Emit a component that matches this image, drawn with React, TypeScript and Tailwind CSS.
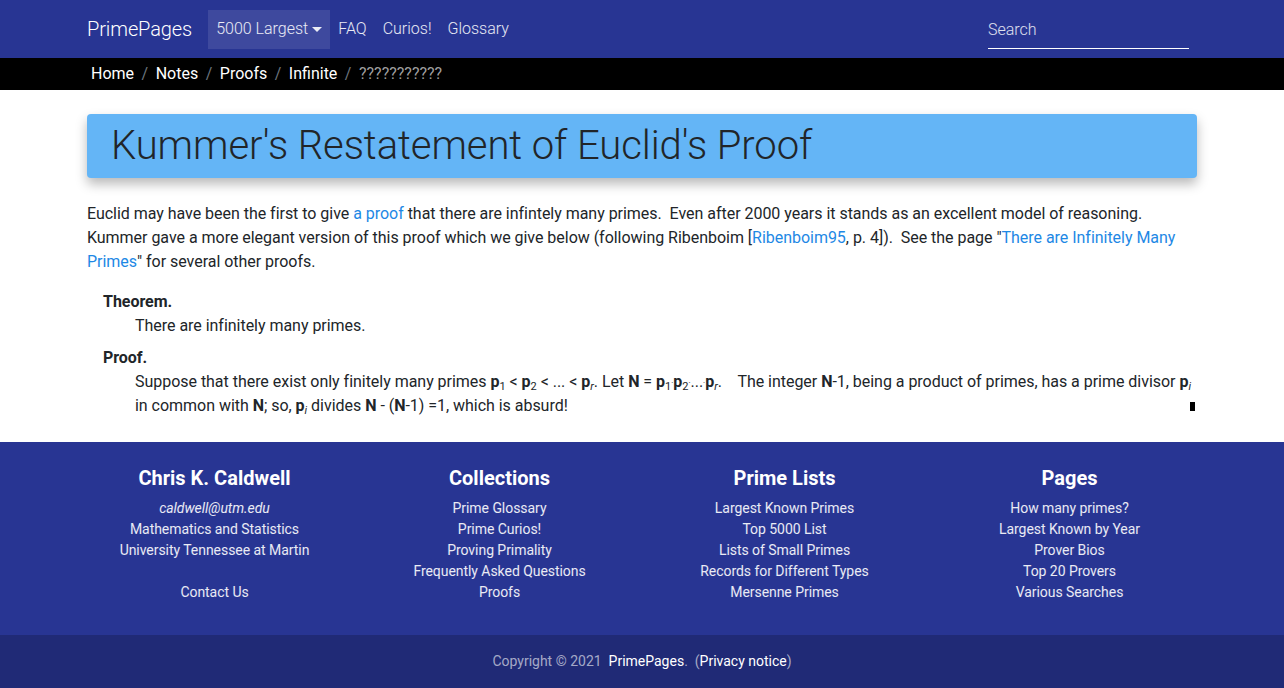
import React from "react";

const Sub = ({ children, i }: { children: React.ReactNode; i?: boolean }) => (
  <sub className={`text-[11px] ${i ? "italic" : ""}`}>{children}</sub>
);
const Dot = () => <sup className="text-[8px]">.</sup>;

export default function App() {
  const cols = [
    {
      h: "Chris K. Caldwell",
      items: [
        <span className="italic">caldwell@utm.edu</span>,
        "Mathematics and Statistics",
        "University Tennessee at Martin",
        "\u00a0",
        "Contact Us",
      ],
    },
    {
      h: "Collections",
      items: ["Prime Glossary", "Prime Curios!", "Proving Primality", "Frequently Asked Questions", "Proofs"],
    },
    {
      h: "Prime Lists",
      items: ["Largest Known Primes", "Top 5000 List", "Lists of Small Primes", "Records for Different Types", "Mersenne Primes"],
    },
    {
      h: "Pages",
      items: ["How many primes?", "Largest Known by Year", "Prover Bios", "Top 20 Provers", "Various Searches"],
    },
  ];
  return (
    <div className="min-h-[688px] bg-white text-[#212529]" style={{ fontFamily: "Roboto, 'Noto Sans', sans-serif" }}>
      {/* navbar */}
      <nav className="h-[58px] bg-[#283593] font-light">
        <div className="mx-auto flex h-full w-[1110px] items-center">
          <span className="mr-4 text-[20px] tracking-[-0.1px] text-white">PrimePages</span>
          <div className="flex h-[39px] items-center bg-white/10 px-2 text-[16px] text-white/90">
            5000 Largest
            <span className="ml-[4px] inline-block h-0 w-0 border-x-[5px] border-t-[5px] border-x-transparent border-t-white/90" />
          </div>
          <span className="px-2 text-[16px] text-white/90">FAQ</span>
          <span className="px-2 text-[16px] text-white/90">Curios!</span>
          <span className="px-2 text-[16px] text-white/90">Glossary</span>
          <div className="ml-auto mr-[8px] flex h-[39px] w-[201px] items-center border-b border-white pt-[2px] text-[16px] text-white/85">
            Search
          </div>
        </div>
      </nav>
      {/* breadcrumb */}
      <div className="h-[32px] bg-black">
        <div className="mx-auto flex h-full w-[1110px] items-center pl-1 text-[16px]">
          {["Home", "Notes", "Proofs", "Infinite"].map((t) => (
            <React.Fragment key={t}>
              <span className="text-white">{t}</span>
              <span className="px-[7.5px] text-[#6c757d]">/</span>
            </React.Fragment>
          ))}
          <span className="text-[#9e9e9e]">???????????</span>
        </div>
      </div>
      {/* main */}
      <main className="mx-auto w-[1110px] pt-6 pb-[24px] text-[16px] leading-6 tracking-[-0.03px]">
        <div className="mb-6 rounded bg-[#64b5f6] py-2 pl-6 shadow-[0_6px_12px_rgba(0,0,0,0.28)]">
          <h1 className="text-[40px] font-light leading-[48px] tracking-[-0.08px] text-[#212529]">Kummer's Restatement of Euclid's Proof</h1>
        </div>
        <p className="mb-4">
          Euclid may have been the first to give <span className="text-[#1e88e5]">a proof</span> that there are infintely many primes.&nbsp; Even after 2000 years it stands as an excellent model of reasoning.&nbsp; Kummer gave a more elegant version of this proof which we give below (following Ribenboim [<span className="text-[#1e88e5]">Ribenboim95</span>, p. 4]).&nbsp; See the page "<span className="text-[#1e88e5]">There are Infinitely Many Primes</span>" for several other proofs.
        </p>
        <dl className="pl-4">
          <dt className="font-bold">Theorem.</dt>
          <dd className="mb-2 pl-8">There are infinitely many primes.</dd>
          <dt className="font-bold">Proof.</dt>
          <dd className="pl-8">
            Suppose that there exist only finitely many primes <b>p</b>
            <Sub>1</Sub> &lt; <b>p</b>
            <Sub>2</Sub> &lt; ... &lt; <b>p</b>
            <Sub i>r</Sub>. Let <b>N</b> = <b>p</b>
            <Sub>1</Sub>
            <Dot />
            <b>p</b>
            <Sub>2</Sub>
            <Dot />
            ...
            <Dot />
            <b>p</b>
            <Sub i>r</Sub>.&nbsp;&nbsp;&nbsp; The integer <b>N</b>-1, being a product of primes, has a prime divisor <b>p</b>
            <Sub i>i</Sub> in common with <b>N</b>; so, <b>p</b>
            <Sub i>i</Sub> divides <b>N</b> - (<b>N</b>-1) =1, which is absurd!
            <span className="float-right mt-[8px] mr-[2px] inline-block h-[9px] w-[5px] bg-black" />
          </dd>
        </dl>
      </main>
      {/* footer */}
      <footer className="bg-[#283593] text-white">
        <div className="mx-auto grid w-[1140px] grid-cols-4 pt-6 pb-[32px] text-center">
          {cols.map((c) => (
            <div key={c.h} className="px-[15px]">
              <h5 className="mb-[8px] text-[20px] font-bold leading-6">{c.h}</h5>
              {c.items.map((it, k) => (
                <div key={k} className="text-[14px] leading-[21px] tracking-[-0.05px] text-white/90">
                  {it}
                </div>
              ))}
            </div>
          ))}
        </div>
        <div className="flex h-[53px] items-center justify-center bg-[#202a76] text-[14px]">
          <span className="text-white/60">Copyright © 2021&nbsp;&nbsp;</span>
          <span className="text-white">PrimePages</span>
          <span className="text-white/60">.&nbsp; (</span>
          <span className="text-white">Privacy notice</span>
          <span className="text-white/60">)</span>
        </div>
      </footer>
    </div>
  );
}
